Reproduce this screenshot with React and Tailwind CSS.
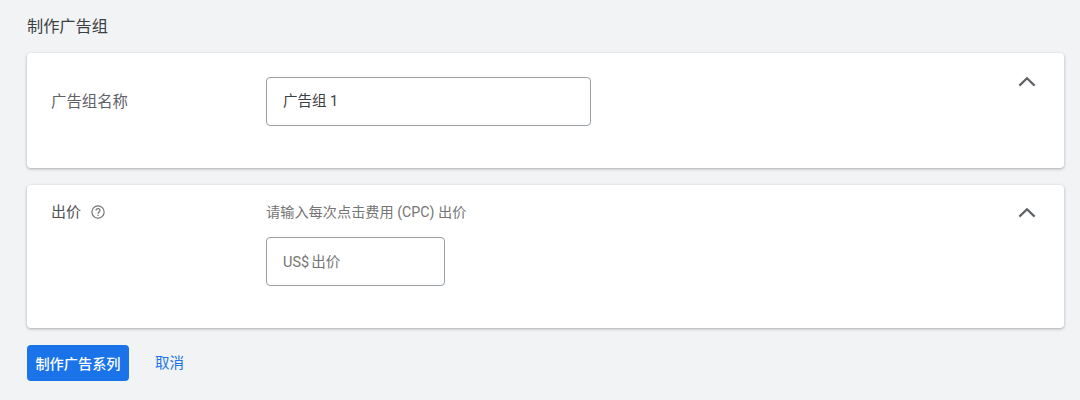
function ChevronUp() {
  return (
    <svg width="24" height="24" viewBox="0 0 24 24" className="text-[#5f6368]">
      <path d="M4.4 15.6 12 8.2l7.6 7.4" fill="none" stroke="currentColor" strokeWidth="2.2" />
    </svg>
  )
}

function HelpIcon() {
  return (
    <svg width="16" height="16" viewBox="0 0 24 24" fill="none" stroke="#757575" strokeWidth="1.8">
      <circle cx="12" cy="12" r="9.2" />
      <path d="M9 9.8a3 3 0 0 1 6 0c0 2-3 2.4-3 4.7" />
      <path d="M12 16.2v1.9" />
    </svg>
  )
}

export default function App() {
  return (
    <div className="h-[400px] w-[1080px] overflow-hidden bg-[#f1f3f4] pl-[27px] pr-4 font-['Roboto','Noto_Sans_CJK_SC',sans-serif] text-sm text-[#3c4043]">
      <h2 className="pt-[17px] text-[16.2px] leading-5 font-normal">制作广告组</h2>

      <section className="relative mt-[16px] flex h-[115px] rounded bg-white pt-6 pl-6 shadow-[0_1px_3px_rgba(60,64,67,0.4)]">
        <div className="w-[215px] pt-[15px] text-[15.4px] leading-5 text-[#5f6368]">广告组名称</div>
        <div className="flex h-[49px] w-[325px] items-center rounded border border-[#9aa0a6] px-4 pt-[1px] text-[14.5px] text-[#3c4043]">
          广告组 1
        </div>
        <div className="absolute top-[17px] right-[25px]">
          <ChevronUp />
        </div>
      </section>

      <section className="relative mt-[17px] flex h-[143px] rounded bg-white pt-[17px] pl-6 shadow-[0_1px_3px_rgba(60,64,67,0.4)]">
        <div className="flex h-5 w-[215px] items-center gap-[9px] text-[15px] leading-5 text-[#4d5156]">
          出价
          <HelpIcon />
        </div>
        <div>
          <p className="text-[14.2px] leading-5 text-[#757575]">请输入每次点击费用 (CPC) 出价</p>
          <div className="mt-[15px] flex h-[49px] w-[179px] items-center gap-[2px] rounded border border-[#9aa0a6] px-4 pt-[4px] text-[14.5px] text-[#757575]">
            <span>US$</span>
            <span>出价</span>
          </div>
        </div>
        <div className="absolute top-4 right-[25px]">
          <ChevronUp />
        </div>
      </section>

      <div className="mt-[17px] flex items-center">
        <button type="button" className="h-9 w-[102px] rounded bg-[#1a73e8] pt-[2px] text-[14.2px] font-medium text-white">
          制作广告系列
        </button>
        <button type="button" className="ml-[26px] pt-[3px] text-[14.5px] font-normal text-[#1a73e8]">
          取消
        </button>
      </div>
    </div>
  )
}
